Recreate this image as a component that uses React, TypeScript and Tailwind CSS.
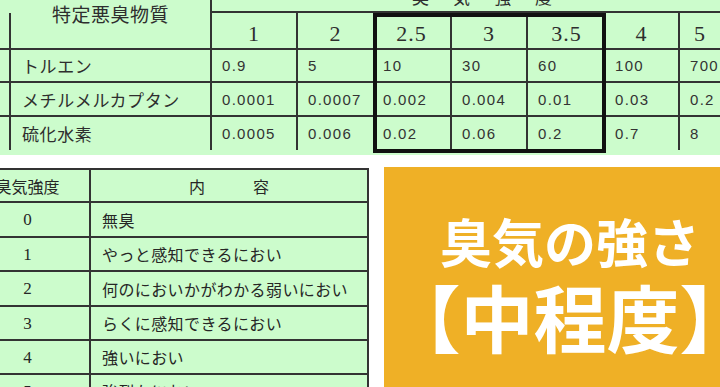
import React from "react";

const rowsTop = [
  { name: "トルエン", vals: ["0.9", "5", "10", "30", "60", "100", "700"] },
  { name: "メチルメルカプタン", vals: ["0.0001", "0.0007", "0.002", "0.004", "0.01", "0.03", "0.2"] },
  { name: "硫化水素", vals: ["0.0005", "0.006", "0.02", "0.06", "0.2", "0.7", "8"] },
];

const heads = ["1", "2", "2.5", "3", "3.5", "4", "5"];
// whether a value column draws its right line (columns touching the thick frame do not)
const rightLine = [true, false, true, true, false, true, false];

const rowsBottom = [
  { n: "0", t: "無臭", h: "h-[35px]" },
  { n: "1", t: "やっと感知できるにおい", h: "h-[34px]" },
  { n: "2", t: "何のにおいかがわかる弱いにおい", h: "h-[35px]" },
  { n: "3", t: "らくに感知できるにおい", h: "h-[34px]" },
  { n: "4", t: "強いにおい", h: "h-[34px]" },
  { n: "5", t: "強烈なにおい", h: "h-[34px]" },
];

export default function App() {
  return (
    <div className="w-[720px] h-[387px] overflow-hidden bg-white relative">
      {/* top table */}
      <div className="relative grid grid-cols-[11px_201px_86px_75px_79px_76px_77px_75px_40px] grid-rows-[13px_37px_33px_34px_33px_5px] bg-[#ccfccc] text-[#2e2e2e]">
        <div className="row-start-1 col-start-1" />
        <div className="row-start-1 row-span-2 col-start-2 border-r-2 border-b-2 border-[#333] flex justify-center pt-[4px] text-[19px] leading-none font-['Noto_Sans_CJK_JP',sans-serif] tracking-[0.5px]">
          特定悪臭物質
        </div>
        <div className="row-start-1 col-start-3 col-span-7 border-b-2 border-[#333]">
          <span className="flex gap-[24px] pl-[200px] -mt-[12px] text-[17px] leading-[17px] font-['Noto_Sans_CJK_JP',sans-serif]">
            <span>臭</span>
            <span>気</span>
            <span>強</span>
            <span>度</span>
          </span>
        </div>
        {/* header numbers row */}
        <div className="row-start-2 col-start-1 border-r-2 border-b-2 border-[#333]" />
        {heads.map((h, i) => (
          <div
            key={h}
            className={
              "row-start-2 border-b-2 border-[#333] flex items-center justify-center pt-[6px] text-[22px] leading-none tracking-[1px] font-['Liberation_Serif',serif] " +
              (rightLine[i] ? "border-r-2" : "")
            }
          >
            {h}
          </div>
        ))}
        {/* data rows */}
        {rowsTop.map((r, ri) => (
          <React.Fragment key={r.name}>
            <div className={"border-r-2 border-[#333] " + (ri < 2 ? "border-b-2" : "")} />
            <div
              className={
                "border-r-2 border-[#333] flex items-center pl-[11px] text-[17px] tracking-[0.6px] leading-none font-['Noto_Sans_CJK_JP',sans-serif] " +
                (ri < 2 ? "border-b-2" : "")
              }
            >
              {r.name}
            </div>
            {r.vals.map((v, i) => (
              <div
                key={i}
                className={
                  "border-[#333] flex items-center pl-[10px] text-[15px] tracking-[1.3px] leading-none font-['Liberation_Sans',sans-serif] text-[#333] " +
                  (ri < 2 ? "border-b-2 " : "") +
                  (rightLine[i] ? "border-r-2" : "")
                }
              >
                {v}
              </div>
            ))}
          </React.Fragment>
        ))}
        <div className="col-span-9" />
        {/* highlighted frame over columns 2.5 – 3.5 */}
        <div className="absolute left-[373px] top-[13px] w-[233px] h-[140px] border-[4px] border-[#111]" />
      </div>

      {/* bottom part */}
      <div className="flex pt-[12px]">
        <div className="w-[369px] overflow-hidden pt-px shrink-0">
          <div className="-ml-[34px] w-[403px] border-t-2 border-r-2 border-[#333] bg-[#ccfccc] text-[#262626] font-['Liberation_Serif','Noto_Sans_CJK_JP',serif]">
            <div className="flex h-[33px] border-b-2 border-[#333]">
              <div className="w-[125px] border-r-2 border-[#333] flex items-center justify-center text-[16px] leading-none font-['Noto_Sans_CJK_JP',serif]">
                臭気強度
              </div>
              <div className="flex-1 flex items-center justify-center gap-[48px] text-[16px] leading-none font-['Noto_Sans_CJK_JP',serif]">
                <span>内</span>
                <span>容</span>
              </div>
            </div>
            {rowsBottom.map((r) => (
              <div key={r.n} className={"flex border-b-2 border-[#333] " + r.h}>
                <div className="w-[125px] border-r-2 border-[#333] flex items-center justify-center text-[17px] leading-none">
                  {r.n}
                </div>
                <div className="flex-1 flex items-center pl-[11px] text-[16px] tracking-[0.4px] leading-none font-['Noto_Sans_CJK_JP',serif]">
                  {r.t}
                </div>
              </div>
            ))}
          </div>
        </div>
        <div className="ml-[15px] flex-1 min-w-0 overflow-hidden h-[220px] bg-[#efb026] flex flex-col items-center pt-[48px] pl-[36px] text-white font-bold font-['Noto_Sans_CJK_JP',sans-serif]">
          <div className="text-[52px] leading-none whitespace-nowrap">臭気の強さ</div>
          <div className="mt-[12px] text-[73px] leading-none whitespace-nowrap">【中程度】</div>
        </div>
      </div>
    </div>
  );
}
